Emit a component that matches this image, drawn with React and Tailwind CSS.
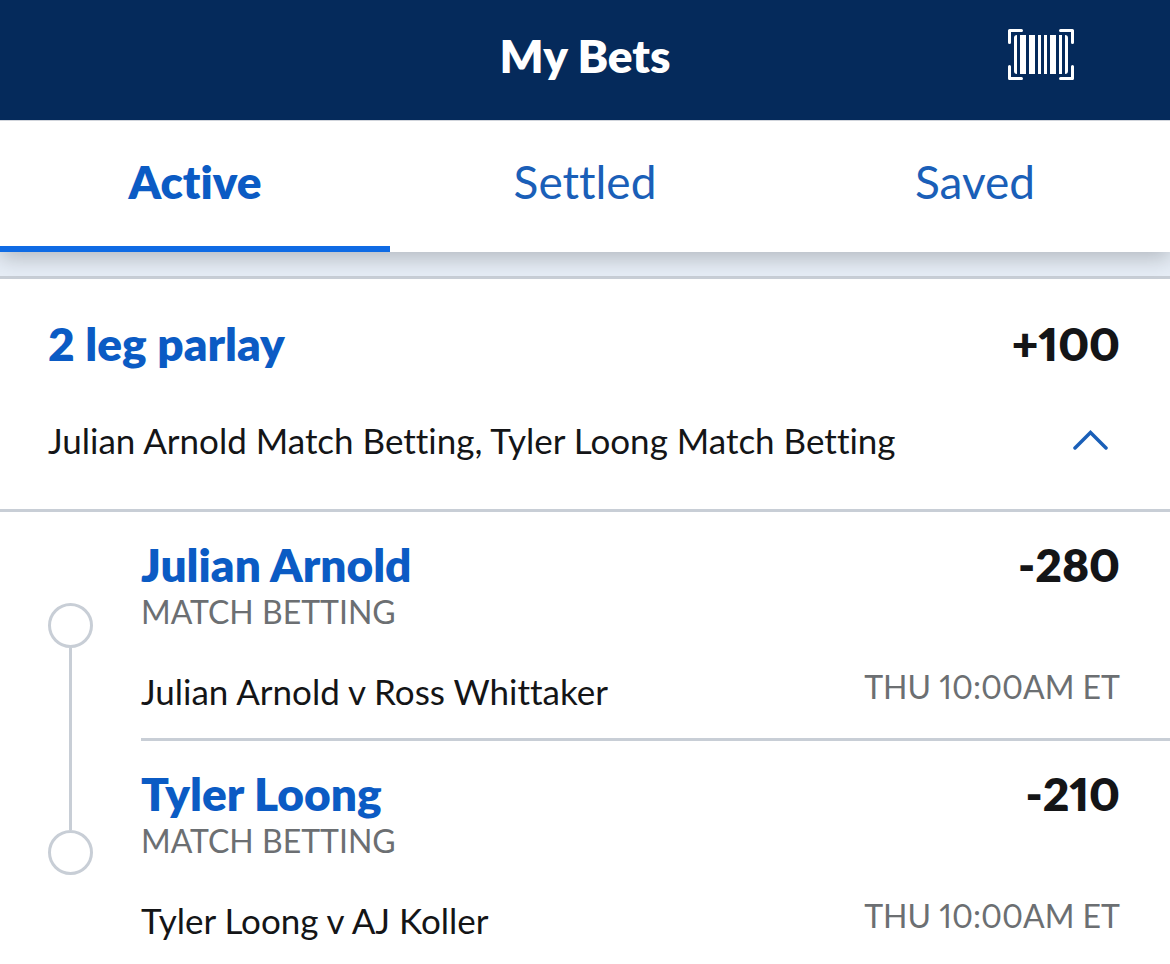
import React, { useState } from "react";

const tabs = ["Active", "Settled", "Saved"];

const legs = [
  {
    name: "Julian Arnold",
    market: "MATCH BETTING",
    match: "Julian Arnold v Ross Whittaker",
    odds: "-280",
    time: "THU 10:00AM ET",
  },
  {
    name: "Tyler Loong",
    market: "MATCH BETTING",
    match: "Tyler Loong v AJ Koller",
    odds: "-210",
    time: "THU 10:00AM ET",
  },
];

function BarcodeIcon() {
  return (
    <svg width="66" height="51" viewBox="0 0 66 51" aria-hidden="true">
      <path
        d="M1.5 13.5V1.5H13.5M52.5 1.5H64.5V13.5M64.5 37.5V49.5H52.5M13.5 49.5H1.5V37.5"
        fill="none"
        stroke="white"
        strokeWidth="3"
        strokeLinecap="round"
        strokeLinejoin="round"
      />
      <path
        d="M9 6v39q-3 0-3-3V9q0-3 3-3zM12 6h6v39h-6zM21 6h6v39h-6zM30 6h3v39h-3zM36 6h3v39h-3zM42 6h6v39h-6zM51 6h3v39h-3zM57 6q3 0 3 3v33q0 3-3 3z"
        fill="white"
      />
    </svg>
  );
}

function Leg({ leg, last }) {
  return (
    <li
      className={`flex justify-between pt-[23px] pr-[50px] ${
        last ? "pb-5" : "border-b-[3px] border-[#c8ced6] pb-[23px]"
      }`}
    >
      <div>
        <h3 className="text-[46px] leading-[60px] font-extrabold text-[#0b5bc4]">
          {leg.name}
        </h3>
        <p className="text-[32px] leading-[34px] text-[#6c6f72]">
          {leg.market}
        </p>
        <p className="mt-[38px] text-[35px] leading-12">{leg.match}</p>
      </div>
      <div className="flex flex-col items-end">
        <p className="text-[46px] leading-[60px] font-extrabold">{leg.odds}</p>
        <p className="mt-[75px] text-[32px] leading-[34px] text-[#6c6f72]">
          {leg.time}
        </p>
      </div>
    </li>
  );
}

export default function App() {
  const [active, setActive] = useState("Active");
  const [open, setOpen] = useState(true);

  return (
    <div className="min-h-screen bg-white font-['Lato',sans-serif] text-[#141517] proportional-nums [font-variant-ligatures:none]">
      <header className="relative z-10 grid h-[120px] grid-cols-[1fr_auto_1fr] items-center bg-[#052a5b] px-24 pb-2">
        <h1 className="col-start-2 text-[46px] leading-[60px] font-extrabold text-white">
          My Bets
        </h1>
        <button type="button" aria-label="Scan barcode" className="mb-1 justify-self-end">
          <BarcodeIcon />
        </button>
      </header>

      {/* Tabs */}
      <nav className="relative flex border-t border-gray-300 bg-white shadow-[0_6px_20px_rgba(0,0,0,0.22)]">
        {tabs.map((tab) => (
          <button
            key={tab}
            type="button"
            onClick={() => setActive(tab)}
            className={`flex-1 border-b-[6px] pt-[31px] pb-[34px] text-[46px] leading-[60px] ${
              active === tab
                ? "border-[#0f6be4] font-extrabold text-[#0b5bc4]"
                : "border-transparent text-[#1a5fb8]"
            }`}
          >
            {tab}
          </button>
        ))}
      </nav>

      <main className="bg-[#e6edf6] pt-6">
        <section className="border-t-[3px] border-[#c8ced6] bg-white">
          <div className="border-b-[3px] border-[#c8ced6] pt-[35px] pr-[50px] pb-[45px] pl-12">
            <div className="flex justify-between text-[46px] leading-[60px] font-extrabold">
              <h2 className="text-[#0b5bc4]">2 leg parlay</h2>
              <p>+100</p>
            </div>
            <div className="mt-[42px] flex items-center justify-between">
              <p className="text-[35px] leading-12">
                Julian Arnold Match Betting, Tyler Loong Match Betting
              </p>
              <button
                type="button"
                aria-label="Toggle legs"
                aria-expanded={open}
                onClick={() => setOpen(!open)}
                className="mr-3"
              >
                <svg width="35" height="20" viewBox="0 0 35 20" fill="none">
                  <path
                    d="M2 18L17.5 2.5L33 18"
                    stroke="#1a5fb8"
                    strokeWidth="3.5"
                    strokeLinecap="round"
                  />
                </svg>
              </button>
            </div>
          </div>

          {/* Legs */}
          {open && (
            <div className="flex">
              <div className="flex w-[141px] flex-col items-start pt-[91px] pb-[89px] pl-12">
                <span className="size-[45px] rounded-full border-[3px] border-[#c8ced6]" />
                <span className="ml-[21px] w-[3px] flex-1 bg-[#c8ced6]" />
                <span className="size-[45px] rounded-full border-[3px] border-[#c8ced6]" />
              </div>
              <ul className="flex-1">
                {legs.map((leg, i) => (
                  <Leg key={leg.name} leg={leg} last={i === legs.length - 1} />
                ))}
              </ul>
            </div>
          )}
        </section>
      </main>
    </div>
  );
}
